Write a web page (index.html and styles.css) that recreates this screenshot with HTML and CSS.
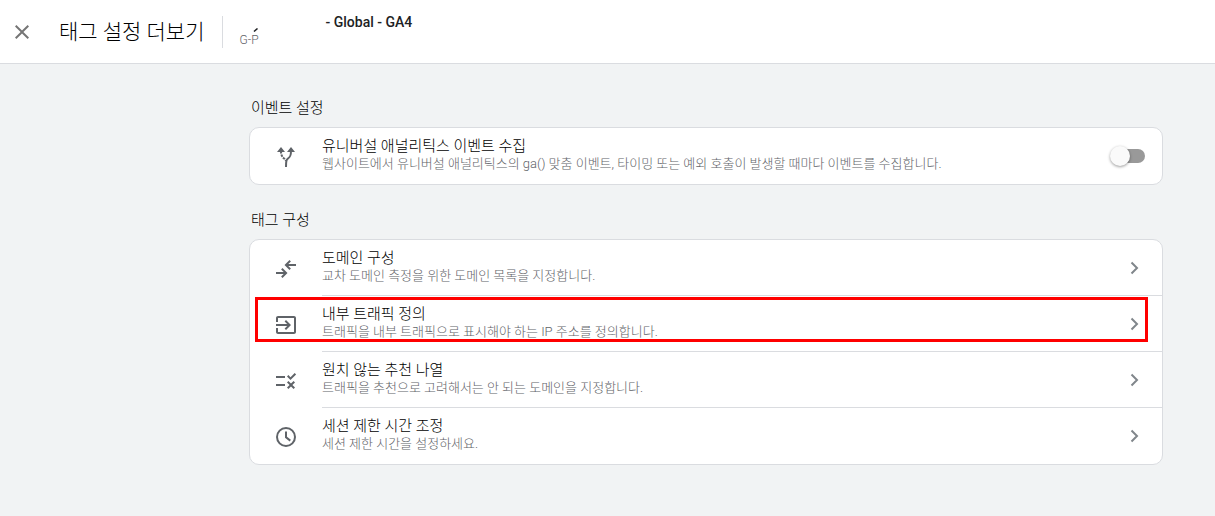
FILE: index.html
```html
<!DOCTYPE html>
<html lang="ko">
<head>
<meta charset="utf-8">
<meta name="viewport" content="width=device-width, initial-scale=1">
<title>태그 설정 더보기</title>
<link rel="stylesheet" href="styles.css">
</head>
<body>
<header class="topbar">
  <button class="close" type="button" aria-label="닫기">
    <svg viewBox="0 0 24 24"><path d="M19 6.4 17.6 5 12 10.6 6.4 5 5 6.4l5.6 5.6L5 17.6 6.4 19l5.6-5.6 5.6 5.6 1.4-1.4-5.6-5.6z"/></svg>
  </button>
  <h1 class="page-title">태그 설정 더보기</h1>
  <div class="tag">
    <div class="tag-name">
      <svg class="tag-mark" viewBox="0 0 6 4" aria-hidden="true"><path d="M1 3.5 4.500.5" /></svg>
      <span>- Global - GA4</span>
    </div>
    <div class="tag-id">G-P</div>
  </div>
</header>
<main class="content">
  <section>
    <h2 class="section-title">이벤트 설정</h2>
    <div class="card">
      <label class="row" for="collect">
        <svg class="icon" viewBox="0 0 24 24"><path d="M3 7 7 2l4 5zM13 7l4-5 4 5z"/><path class="line" d="M17 6c0 5-1 6-3 7.500-1.500 1.200-2 2-2 8.500"/><path class="line" stroke-dasharray="2.500 1" d="M7 6c0 4 1 5.500 2.500 7 1 .8 2 1.500 2.500 3"/></svg>
        <span class="text">
          <span class="name">유니버설 애널리틱스 이벤트 수집</span>
          <span class="desc">웹사이트에서 유니버설 애널리틱스의 ga() 맞춤 이벤트, 타이밍 또는 예외 호출이 발생할 때마다 이벤트를 수집합니다.</span>
        </span>
        <input class="switch" id="collect" type="checkbox" role="switch">
      </label>
    </div>
  </section>
  <section>
    <h2 class="section-title">태그 구성</h2>
    <nav class="card">
      <a class="row" href="#domains">
        <svg class="icon" viewBox="0 0 24 24"><path d="M8.500 11 7.100 12.400 9.700 15H2v2h7.700l-2.600 2.600L8.500 21l5-5zM15.500 13l1.400-1.400L14.300 9H22V7h-7.700l2.600-2.600L15.500 3l-5 5z"/></svg>
        <span class="text"><span class="name">도메인 구성</span><span class="desc">교차 도메인 측정을 위한 도메인 목록을 지정합니다.</span></span>
        <svg class="chevron" viewBox="0 0 24 24"><path d="m9.500 6.500 5.500 5.500-5.500 5.500"/></svg>
      </a>
      <a class="row highlighted" href="#internal">
        <svg class="icon" viewBox="0 0 24 24"><path d="M20 3H4c-1.100 0-2 .9-2 2v4h2V5h16v14H4v-4H2v4c0 1.100.9 2 2 2h16c1.100 0 2-.9 2-2V5c0-1.100-.9-2-2-2zM12 17l5-5-5-5-1.400 1.400L13.200 11H2v2h11.200l-2.600 2.600z"/></svg>
        <span class="text"><span class="name">내부 트래픽 정의</span><span class="desc">트래픽을 내부 트래픽으로 표시해야 하는 IP 주소를 정의합니다.</span></span>
        <svg class="chevron" viewBox="0 0 24 24"><path d="m9.500 6.500 5.500 5.500-5.500 5.500"/></svg>
      </a>
      <a class="row" href="#referrals">
        <svg class="icon" viewBox="0 0 24 24"><path d="M16.500 11 13 7.500l1.400-1.400 2.100 2.100L20.700 4l1.400 1.400zM11 7H2v2h9zM21 13.400 19.600 12 17 14.600 14.400 12 13 13.400l2.600 2.600L13 18.600l1.400 1.400 2.600-2.600 2.600 2.600 1.400-1.400-2.600-2.600zM11 15H2v2h9z"/></svg>
        <span class="text"><span class="name">원치 않는 추천 나열</span><span class="desc">트래픽을 추천으로 고려해서는 안 되는 도메인을 지정합니다.</span></span>
        <svg class="chevron" viewBox="0 0 24 24"><path d="m9.500 6.500 5.500 5.500-5.500 5.500"/></svg>
      </a>
      <a class="row" href="#session">
        <svg class="icon" viewBox="0 0 24 24"><path d="M12 2a10 10 0 1 0 0 20 10 10 0 0 0 0-20zm0 18a8 8 0 1 1 0-16 8 8 0 0 1 0 16zM13 6.500h-2v6.300l4.700 3.600 1.200-1.600-3.900-3z"/></svg>
        <span class="text"><span class="name">세션 제한 시간 조정</span><span class="desc">세션 제한 시간을 설정하세요.</span></span>
        <svg class="chevron" viewBox="0 0 24 24"><path d="m9.500 6.500 5.500 5.500-5.500 5.500"/></svg>
      </a>
    </nav>
  </section>
</main>
</body>
</html>
```
FILE: styles.css
```css
* {
  box-sizing: border-box;
}

body {
  margin: 0;
  min-height: 100vh;
  background: #f1f3f4;
  color: #000;
  font-family: Roboto, "Noto Sans CJK KR", sans-serif;
}

.topbar {
  display: flex;
  align-items: center;
  height: 64px;
  padding-left: 10px;
  background: #fff;
  border-bottom: 1px solid #dadce0;
}

.close {
  width: 24px;
  height: 24px;
  padding: 0;
  border: 0;
  background: none;
}

.close svg {
  display: block;
  fill: #757575;
}

.page-title {
  margin: 0 18px 0 25px;
  font-size: 21px;
  font-weight: 300;
  line-height: 32px;
}

.tag {
  height: 32px;
  padding-left: 16px;
  border-left: 1px solid #dadce0;
}

.tag-name {
  display: flex;
  gap: 66px;
  height: 16px;
  padding-left: 14px;
  color: #202124;
  font-size: 14px;
  font-weight: 500;
  line-height: 12px;
}

.tag-mark {
  width: 6px;
  height: 4px;
  align-self: flex-end;
  fill: none;
  stroke: #202124;
  stroke-width: 1.5;
}

.tag-id {
  color: #5f6368;
  font-size: 12px;
  font-weight: 300;
  line-height: 16px;
}

.content {
  display: grid;
  gap: 24px;
  padding: 34px 52px 48px 249px;
}

.section-title {
  margin: 0 0 9px 2px;
  font-size: 15px;
  font-weight: 300;
  line-height: 20px;
}

.section-title + .card {
  margin-bottom: 1px;
}

.card {
  background: #fff;
  border: 1px solid #dadce0;
  border-radius: 10px;
}

.row {
  position: relative;
  display: flex;
  height: 56px;
  padding-left: 24px;
  color: inherit;
  text-decoration: none;
}

.icon {
  flex: none;
  align-self: center;
  width: 24px;
  height: 24px;
  margin: 2px 24px 0 0;
  fill: #5f6368;
}

.line {
  fill: none;
  stroke: #5f6368;
  stroke-width: 2;
}

.text {
  flex: 1;
  display: flex;
  flex-direction: column;
  padding-top: 9px;
}

.name {
  font-size: 15px;
  font-weight: 300;
  line-height: 18px;
}

.desc {
  color: #5f6368;
  font-size: 13px;
  font-weight: 300;
  line-height: 18px;
}

.chevron {
  flex: none;
  align-self: center;
  width: 24px;
  height: 24px;
  margin-right: 16px;
  fill: none;
  stroke: #80868b;
  stroke-width: 2;
}

.row + .row::before {
  content: "";
  position: absolute;
  top: -1px;
  right: 0;
  left: 72px;
  border-top: 1px solid #dadce0;
}

.highlighted::after {
  content: "";
  position: absolute;
  inset: 1px 14px 10px 5px;
  border: 3px solid #f00;
}

.switch {
  appearance: none;
  position: relative;
  align-self: center;
  width: 34px;
  height: 14px;
  margin: 0 17px 0 0;
  border-radius: 7px;
  background: #999;
}

.switch::before {
  content: "";
  position: absolute;
  top: -3px;
  left: -1px;
  width: 20px;
  height: 20px;
  border-radius: 50%;
  background: #fafafa;
  box-shadow: 0 1px 3px rgba(0, 0, 0, 0.4);
}
```
